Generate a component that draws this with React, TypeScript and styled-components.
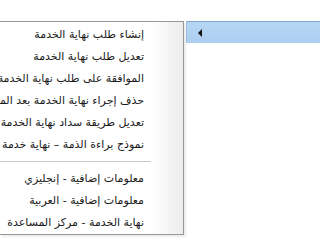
import React from "react";
import styled, { createGlobalStyle } from "styled-components";

const GlobalStyle = createGlobalStyle`
  html, body {
    margin: 0;
    padding: 0;
    background: #ffffff;
    overflow: hidden;
  }
  body {
    font-family: "DejaVu Sans", "Noto Sans", sans-serif;
  }
`;

type Entry = { label?: string; separator?: boolean };

const entries: Entry[] = [
  { label: "إنشاء طلب نهاية الخدمة" },
  { label: "تعديل طلب نهاية الخدمة" },
  { label: "الموافقة على طلب نهاية الخدمة" },
  { label: "حذف إجراء نهاية الخدمة بعد الموافقة" },
  { label: "تعديل طريقة سداد نهاية الخدمة" },
  { label: "نموذج براءة الذمة – نهاية خدمة" },
  { separator: true },
  { label: "معلومات إضافية - إنجليزي" },
  { label: "معلومات إضافية - العربية" },
  { label: "نهاية الخدمة - مركز المساعدة" },
];

export default function App() {
  return (
    <>
      <GlobalStyle />
      <Screen>
        <Menu>
          {entries.map((e, i) =>
            e.separator ? (
              <Separator key={i} />
            ) : (
              <Item key={i}>{e.label}</Item>
            )
          )}
        </Menu>
        <Parent>
          <Arrow />
        </Parent>
      </Screen>
    </>
  );
}

const Screen = styled.div`
  display: flex;
  align-items: flex-start;
  width: 320px;
  height: 240px;
  padding-top: 21px;
  box-sizing: border-box;
  overflow: hidden;
`;

const Menu = styled.div`
  flex: 0 0 184px;
  height: 214px;
  box-sizing: border-box;
  border: 1px solid #979797;
  border-left: none;
  padding-top: 2px;
  background: linear-gradient(to right, #ffffff 0, #ffffff 152px, #ececec 100%);
  box-shadow: 2px 2px 2px rgba(0, 0, 0, 0.08);
  direction: rtl;
  overflow: hidden;
`;

const Item = styled.div`
  height: 22px;
  line-height: 22px;
  padding-right: 39px;
  white-space: nowrap;
  font-size: 11px;
  color: #1a1a1a;
`;

const Separator = styled.div`
  height: 12px;
  display: flex;
  align-items: center;
  margin-right: 32px;
  &::after {
    content: "";
    flex: 1;
    height: 0;
    border-top: 1px solid #c8c8c8;
    border-bottom: 1px solid #ffffff;
  }
`;

const Parent = styled.div`
  flex: 1;
  margin-left: 2px;
  height: 22px;
  box-sizing: border-box;
  border-top: 1px solid #7fa6d3;
  border-left: 1px solid #9dbde2;
  background: linear-gradient(to bottom, #b6d6f4, #accef0);
  display: flex;
  align-items: center;
  padding-left: 11px;
`;

const Arrow = styled.span`
  width: 0;
  height: 0;
  border-top: 4px solid transparent;
  border-bottom: 4px solid transparent;
  border-right: 4px solid #111111;
`;
